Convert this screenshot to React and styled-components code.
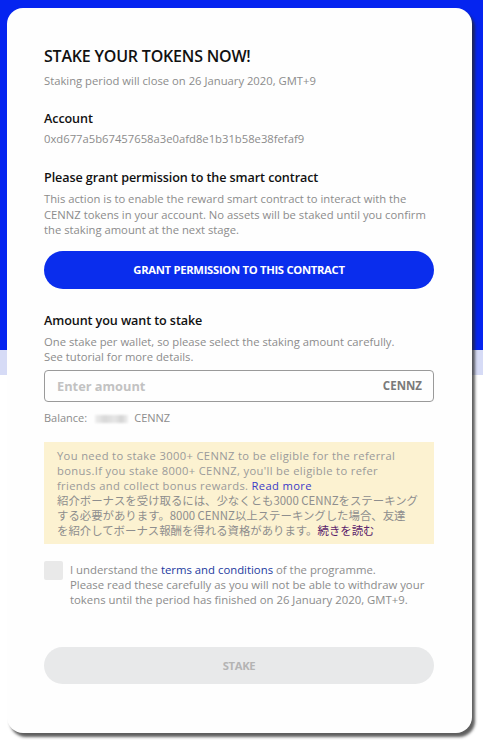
import React from "react";
import styled, { createGlobalStyle } from "styled-components";

const Global = createGlobalStyle`
  html, body { margin: 0; padding: 0; background: #ffffff; }
  body { font-family: "Open Sans", "Noto Sans CJK JP", sans-serif; }
  * { box-sizing: border-box; }
`;

const Page = styled.div`
  position: relative;
  width: 483px;
  height: 744px;
  overflow: hidden;
  background: #ffffff;
`;

const Hero = styled.div`
  height: 350px;
  background: #0524f0;
`;

const Band = styled.div`
  height: 25px;
  background: #d6dbf6;
`;

const Modal = styled.div`
  position: absolute;
  top: 8px;
  left: 7px;
  width: 465px;
  height: 725px;
  background: #fefefe;
  border-radius: 16px;
  box-shadow: 3px 4px 3px rgba(40, 40, 40, 0.75);
  padding: 37px 38px 48px 37px;
  display: flex;
  flex-direction: column;
`;

const Title = styled.h1`
  margin: 0;
  font-size: 16px;
  line-height: 22px;
  font-weight: 600;
  color: #111;
  letter-spacing: -0.2px;
`;

const Heading = styled.h2`
  margin: ${(p) => p.$top || 0}px 0 0;
  font-size: 12.6px;
  line-height: 20px;
  font-weight: 600;
  color: #111;
  letter-spacing: -0.1px;
`;

const Muted = styled.p`
  margin: ${(p) => p.$top || 0}px 0 0;
  font-size: ${(p) => p.$size || 11.25}px;
  line-height: ${(p) => p.$lh || 16}px;
  color: #8c8c8c;
  white-space: nowrap;
`;

const PrimaryButton = styled.button`
  margin-top: ${(p) => p.$top}px;
  height: ${(p) => p.$h}px;
  width: 100%;
  flex: none;
  border: none;
  border-radius: 20px;
  background: ${(p) => (p.$disabled ? "#e8e9ea" : "#0a2ded")};
  color: ${(p) => (p.$disabled ? "#b4b4b4" : "#ffffff")};
  font-family: "Open Sans", sans-serif;
  font-weight: 700;
  font-size: 11.25px;
  letter-spacing: -0.3px;
  cursor: pointer;
`;

const InputBox = styled.div`
  margin-top: 6px;
  height: 32px;
  flex: none;
  border: 1px solid #9a9a9a;
  border-radius: 4px;
  display: flex;
  align-items: center;
  justify-content: space-between;
  padding: 0 11px 0 12px;
`;

const AmountInput = styled.input`
  border: none;
  outline: none;
  background: transparent;
  font-family: "Open Sans", sans-serif;
  font-weight: 700;
  font-size: 12.8px;
  color: #333;
  flex: 1;
  padding: 0;
  &::placeholder { color: #c2c2c2; }
`;

const Unit = styled.span`
  font-weight: 700;
  font-size: 11.5px;
  color: #7a7a7a;
`;

const Blur = styled.span`
  display: inline-block;
  width: 33px;
  height: 8px;
  margin: 0 6px 0 8px;
  vertical-align: middle;
  background: linear-gradient(90deg, #eee, #d8d8d8 30%, #e6e6e6 60%, #d4d4d4 80%, #efefef);
  filter: blur(1px);
`;

const Notice = styled.div`
  margin-top: 17px;
  background: #fcf2d1;
  padding: 6px 13px 6px;
  white-space: nowrap;
`;

const NoticeEn = styled.div`
  font-family: "Open Sans", sans-serif;
  font-size: 11.2px;
  letter-spacing: 0.35px;
  line-height: 15px;
  color: #9a9a9a;
`;

const NoticeJp = styled.div`
  font-family: "Noto Sans CJK JP", sans-serif;
  font-size: 11.4px;
  line-height: 15px;
  color: #8e8e8e;
`;

const Link = styled.a`
  color: ${(p) => p.$color};
  text-decoration: none;
`;

const CheckRow = styled.label`
  margin-top: 17px;
  display: flex;
  gap: 7px;
  align-items: flex-start;
`;

const Box = styled.span`
  flex: none;
  width: 19px;
  height: 19px;
  border-radius: 2px;
  background: #e9e9e9;
`;

const CheckText = styled.span`
  font-size: 11.35px;
  line-height: 15px;
  color: #8c8c8c;
  margin-top: 1px;
  white-space: nowrap;
`;

export default function App() {
  return (
    <>
      <Global />
      <Page>
        <Hero />
        <Band />
        <Modal>
          <Title>STAKE YOUR TOKENS NOW!</Title>
          <Muted $top={6}>Staking period will close on 26 January 2020, GMT+9</Muted>

          <Heading $top={20}>Account</Heading>
          <Muted $top={2}>0xd677a5b67457658a3e0afd8e1b31b58e38fefaf9</Muted>

          <Heading $top={21}>Please grant permission to the smart contract</Heading>
          <Muted $top={3} $lh={15.5}>
            This action is to enable the reward smart contract to interact with the
            <br />
            CENNZ tokens in your account. No assets will be staked until you confirm
            <br />
            the staking amount at the next stage.
          </Muted>
          <PrimaryButton $top={13} $h={38}>GRANT PERMISSION TO THIS CONTRACT</PrimaryButton>

          <Heading $top={22}>Amount you want to stake</Heading>
          <Muted $top={3} $lh={15}>
            One stake per wallet, so please select the staking amount carefully.
            <br />
            See tutorial for more details.
          </Muted>
          <InputBox>
            <AmountInput placeholder="Enter amount" />
            <Unit>CENNZ</Unit>
          </InputBox>
          <Muted $top={8} $size={11} $lh={15}>
            Balance:<Blur />CENNZ
          </Muted>

          <Notice>
            <NoticeEn>
              You need to stake 3000+ CENNZ to be eligible for the referral
              <br />
              bonus.If you stake 8000+ CENNZ, you'll be eligible to refer
              <br />
              friends and collect bonus rewards. <Link $color="#3b3bc8" href="#">Read more</Link>
            </NoticeEn>
            <NoticeJp>
              紹介ボーナスを受け取るには、少なくとも3000 CENNZをステーキング
              <br />
              する必要があります。8000 CENNZ以上ステーキングした場合、友達
              <br />
              を紹介してボーナス報酬を得れる資格があります。<Link $color="#5a1b6b" href="#">続きを読む</Link>
            </NoticeJp>
          </Notice>

          <CheckRow>
            <Box />
            <CheckText>
              I understand the <Link $color="#1c3a9e" href="#">terms and conditions</Link> of the programme.
              <br />
              Please read these carefully as you will not be able to withdraw your
              <br />
              tokens until the period has finished on 26 January 2020, GMT+9.
            </CheckText>
          </CheckRow>

          <PrimaryButton $top={40} $h={37} $disabled>STAKE</PrimaryButton>
        </Modal>
      </Page>
    </>
  );
}
